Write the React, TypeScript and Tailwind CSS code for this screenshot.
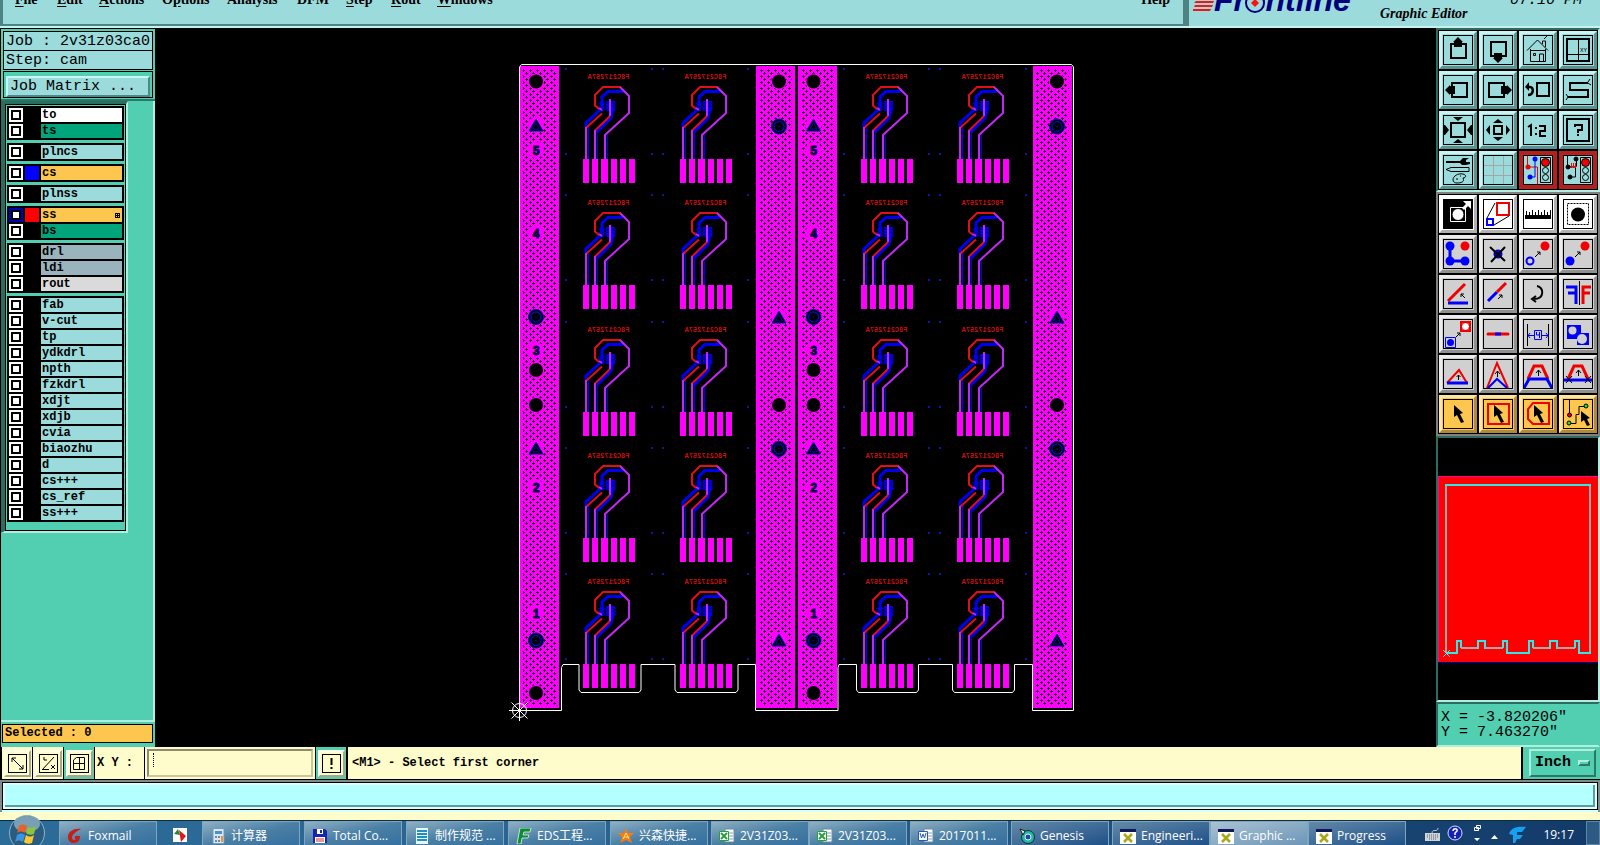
import type { ReactNode } from "react";
import clsx from "clsx";

const MENUS = [
  { name: "File", hot: "F", width: "w-[42px]" },
  { name: "Edit", hot: "E", width: "w-[42px]" },
  { name: "Actions", hot: "A", width: "w-[63px]" },
  { name: "Options", hot: "p", width: "w-[65px]" },
  { name: "Analysis", hot: "", width: "w-[70px]" },
  { name: "DFM", hot: "", width: "w-[49px]" },
  { name: "Step", hot: "S", width: "w-[45px]" },
  { name: "Rout", hot: "R", width: "w-[46px]" },
  { name: "Windows", hot: "W", width: "w-[70px]" },
];

type Layer = { name: string; bg: string; swatch?: string; active?: boolean };

const AQUA = "bg-[#9bdbdb]";

const LAYER_GROUPS: Layer[][] = [
  [
    { name: "to", bg: "bg-white" },
    { name: "ts", bg: "bg-[#00a57c]" },
  ],
  [{ name: "plncs", bg: AQUA }],
  [{ name: "cs", bg: "bg-[#fdc64e]", swatch: "bg-[#0000ff]" }],
  [{ name: "plnss", bg: AQUA }],
  [
    { name: "ss", bg: "bg-[#fdc64e]", swatch: "bg-[#ff0000]", active: true },
    { name: "bs", bg: "bg-[#00a57c]" },
  ],
  [
    { name: "drl", bg: "bg-[#9ab4be]" },
    { name: "ldi", bg: "bg-[#9ab4be]" },
    { name: "rout", bg: "bg-[#dadada]" },
  ],
  ["fab", "v-cut", "tp", "ydkdrl", "npth", "fzkdrl", "xdjt", "xdjb", "cvia", "biaozhu", "d", "cs+++", "cs_ref", "ss+++"].map(
    (name) => ({ name, bg: AQUA })
  ),
];

const MONO = "font-['Liberation_Mono',monospace]";

function MenuLabel({ name, hot }: { name: string; hot: string }) {
  if (!hot) return <>{name}</>;
  const at = name.indexOf(hot);
  return (
    <>
      {name.slice(0, at)}
      <u className="decoration-1 underline-offset-2">{hot}</u>
      {name.slice(at + 1)}
    </>
  );
}

function Header() {
  return (
    <header className="flex h-7 shrink-0 overflow-hidden border-b-2 border-[#c8f2f2] bg-[#9bdbdb] font-['Liberation_Serif',serif] text-black">
      <nav className="flex flex-1 items-start border-x-3 border-b-2 border-[#4d8383] pl-3">
        {MENUS.map((m) => (
          <button key={m.name} className={clsx("-mt-2.5 text-left text-sm font-bold leading-5", m.width)}>
            <MenuLabel name={m.name} hot={m.hot} />
          </button>
        ))}
        <button className="-mt-2.5 ml-auto mr-[13px] text-sm font-bold leading-5">Help</button>
      </nav>
      <div className="flex w-[414px] items-start border-l-3 border-[#4d8383] pl-1">
        <svg width="164" height="26" viewBox="0 0 164 26">
          <path d="M3 1h18l-1 2H1zM2 5h18l-1 2H1zM0 9h18l-1 2H0z" fill="#ff1010" />
          <text x="21" y="11" fontSize="32" fontWeight="bold" fontStyle="italic" fill="#00007c" className="font-['Liberation_Sans',sans-serif]">
            Frontline
          </text>
          <circle cx="62" cy="3" r="9" fill="#9bdbdb" stroke="#00007c" strokeWidth="2" />
          <path d="M62 -1l4 4-4 4-4-4z" fill="#ff1010" />
        </svg>
        <span className="ml-[23px] mt-1 text-sm font-bold italic leading-5">Graphic Editor</span>
        <span className={clsx("-mt-[9px] ml-auto mr-[18px] text-[15px] italic leading-5", MONO)}>07:16 PM</span>
      </div>
    </header>
  );
}

function LayerRow({ layer }: { layer: Layer }) {
  return (
    <label className="flex h-3.5 items-center gap-0.5">
      <span className={clsx("flex h-3.5 w-3.5 items-center justify-center", layer.active ? "bg-[#0000b8]" : "bg-white")}>
        <input type="checkbox" className="h-2.5 w-2.5 appearance-none border-2 border-black bg-white" />
      </span>
      <span className={clsx("h-3.5 w-3.5", layer.swatch ?? "bg-black")} />
      <span className={clsx("flex h-3.5 flex-1 items-center justify-between pl-px pr-0.5 text-xs font-bold leading-[14px]", layer.bg)}>
        {layer.name}
        {layer.active && (
          <svg width="5" height="5" viewBox="0 0 5 5">
            <path d="M0 .5h5M0 2.5h5M0 4.5h5M.5 0v5M2.5 0v5M4.5 0v5" stroke="#000" />
          </svg>
        )}
      </span>
    </label>
  );
}

function LayerPanel() {
  return (
    <aside className={clsx("flex w-[155px] shrink-0 flex-col border-l border-black bg-[#52ceb0] text-black", MONO)}>
      <div className="border-b-2 border-t border-b-[#2c7867] border-t-black px-0.5 pb-px pt-0.5">
        <div className="h-5 border border-black bg-[#9bdbdb] pl-0.5 text-[15px] leading-[19px]">Job : 2v31z03ca0</div>
        <div className="h-[19px] border border-t-0 border-black bg-[#9bdbdb] pl-0.5 text-[15px] leading-[19px]">Step: cam</div>
        <div className="mt-px h-[27px] border border-black p-0.5">
          <button className="h-[21px] w-full border-2 border-b-[#4b8a88] border-l-[#c8f8f4] border-r-[#4b8a88] border-t-[#c8f8f4] bg-[#9bdbdb] pl-0.5 text-left text-[15px] leading-[17px]">
            Job Matrix ...
          </button>
        </div>
      </div>
      <div className="flex-1 border-b-2 border-r-2 border-[#b0efdf]">
        <div className="w-[127px] border-b-2 border-l-4 border-r-2 border-t-[3px] border-b-[#b0efdf] border-l-[#2e6b5e] border-r-[#b0efdf] border-t-[#2e6b5e]">
          <div className="flex flex-col gap-[3px] border border-black px-px pb-2 pt-px">
            {LAYER_GROUPS.map((group, i) => (
              <div key={i} className="flex flex-col gap-0.5 border-2 border-black bg-black">
                {group.map((layer) => (
                  <LayerRow key={layer.name} layer={layer} />
                ))}
              </div>
            ))}
          </div>
        </div>
      </div>
      <div className="mb-1 ml-px mr-0.5 mt-0.5 h-[19px] border border-black bg-[#fdc64e] pl-0.5 text-xs font-bold leading-[17px]">
        Selected : 0
      </div>
    </aside>
  );
}

// ---- board drawing ----

const CELL_X = [0, 97, 278, 374];
const ROWS = [0, 1, 2, 3, 4];
const ROW_PITCH = 126.3;

type Mark = ["hole" | "ring" | "tri" | "num", number, string?];

const NUMBERED: Mark[] = [
  ["hole", 81.5], ["tri", 125], ["num", 150, "5"], ["num", 233, "4"], ["ring", 317], ["num", 350, "3"],
  ["hole", 370], ["hole", 405], ["tri", 448], ["num", 487, "2"], ["num", 613, "1"], ["ring", 640.5], ["hole", 693],
];
const PLAIN: Mark[] = [["hole", 81.5], ["ring", 126.5], ["tri", 317], ["hole", 405], ["ring", 449], ["tri", 640]];

const STRIPS = [
  { x: 520, cx: 536, marks: NUMBERED },
  { x: 756, cx: 779, marks: PLAIN },
  { x: 798, cx: 813.5, marks: NUMBERED },
  { x: 1033, cx: 1057, marks: PLAIN },
];

function StripMark({ cx, mark }: { cx: number; mark: Mark }) {
  const [kind, y, text] = mark;
  if (kind === "hole") return <circle cx={cx} cy={y} r="7" fill="#000" />;
  if (kind === "ring")
    return (
      <g stroke="#0010a0">
        <circle cx={cx} cy={y} r="7.500" fill="#000" />
        <circle cx={cx} cy={y} r="5" fill="none" strokeWidth="1.500" />
        <circle cx={cx} cy={y} r="0.500" />
      </g>
    );
  if (kind === "tri")
    return (
      <g stroke="#0010a0">
        <path d={`M${cx} ${y - 6}l7 12h-14z`} fill="#000" />
        <path d={`M${cx} ${y - 2}l3.500 6h-7z`} fill="none" />
      </g>
    );
  return (
    <text x={cx} y={y + 5} textAnchor="middle" fontSize="12" fontWeight="bold" fill="#000c88" stroke="#00002c" className="font-['Liberation_Sans',sans-serif]">
      {text}
    </text>
  );
}

function Circuit({ x, y }: { x: number; y: number }) {
  return (
    <g transform={`translate(${x} ${y})`} fill="none">
      <text transform="translate(629.5 79) scale(-1 1)" fontSize="7" fontWeight="bold" fill="#c81010" className={MONO}>
        F8C217257A
      </text>
      <g fill="#0000d8">
        <path d="M606 101h9v10h-9zM600 102h4v9h-4z" />
        <path d="M598 103h18v1h-18zM598 106h18v1h-18zM598 109h18v1h-18z" fill="#0000a0" />
      </g>
      <g stroke="#0000f0" strokeWidth="3">
        <path d="M623 91.5H608L602 97v9M601 109l-15 14v4M613 108l-2 10-14 14" />
        <path d="M588.500 127v32M597.500 130v29M607.500 135v24" strokeWidth="1" />
      </g>
      <g stroke="#e01018" strokeWidth="2">
        <path d="M621 87H603l-8 8v10.500l4 3.500M602 113.500L586 128M610 116l-15 14.500" />
      </g>
      <g stroke="#c028f4" strokeWidth="2">
        <path d="M620 87l9 9v17l-24 22v24M586 127v32M595 130v29" />
        <path d="M610 99v17M599 108l3 2" />
      </g>
      <path d="M583 159h6v24h-6zM592 159h6v24h-6zM601 159h7v24h-7zM611 159h6v24h-6zM620 159h6v24h-6zM629 159h6v24h-6z" fill="#ff00ff" />
    </g>
  );
}

function Board() {
  return (
    <main className="flex min-w-0 flex-1 items-center justify-center overflow-hidden bg-black">
      <svg width="581" height="677" viewBox="505 49 581 677" className="shrink-0">
        <defs>
          <pattern id="mesh" width="7" height="6" patternUnits="userSpaceOnUse">
            <path d="M0 1h3v1h-3zM1 0h1v3h-1zM4 4h3v1h-3zM5 3h1v3h-1z" fill="#28002c" shapeRendering="crispEdges" />
          </pattern>
        </defs>
        {STRIPS.map((s) => (
          <g key={s.x}>
            <rect x={s.x} y="66" width="39" height="642" fill="#ff00ff" />
            <rect x={s.x + 3} y="69" width="33" height="636" fill="url(#mesh)" />
            {s.marks.map((m, i) => (
              <g key={i}>
                <circle cx={s.cx} cy={m[1]} r="8" fill="#ff00ff" />
                <StripMark cx={s.cx} mark={m} />
              </g>
            ))}
          </g>
        ))}
        {ROWS.map((r) =>
          [566, 652, 663, 748, 844, 929, 940, 1026].map((x) => (
            <path key={`${r}-${x}`} d={`M${x - 1} ${Math.round(68 + r * ROW_PITCH)}h2v2h-2zm0 85h2v2h-2z`} fill="#1414a8" />
          ))
        )}
        {ROWS.map((r) => CELL_X.map((x) => <Circuit key={`${r}-${x}`} x={x} y={Math.round(r * ROW_PITCH)} />))}
        <path
          d="M519.500 710.500V67l2-2.500h550l2 2.500v643.500h-41V664.500h-18V690l-2 2.500h-58l-2-2.500v-25.500h-34V690l-2 2.500h-58l-2-2.500v-25.500h-17.500l-1 3v43H755.500v-46h-17.500V690l-2 2.500h-59l-2-2.500v-25.500h-34V690l-2 2.500h-58l-2-2.500v-25.500h-16l-1.500 3v43z"
          fill="none"
          stroke="#fff"
        />
        <g stroke="#fff" fill="none">
          <circle cx="519.5" cy="710.5" r="7" />
          <path d="M509 710.500h21M519.500 700v21M511.500 702.500l16 16M527.500 702.500l-16 16" />
        </g>
      </svg>
    </main>
  );
}

// ---- toolbar icons, each drawn on a 30x30 grid ----

const K = "#000";
const B = "#0000ff";
const R = "#f00000";

const ARROW = "M11 6l9 8-3 1 4 8-3 1-4-8-3 2z";

const VIEW_ICONS: [string, ReactNode][] = [
  ["Pan up", <><path d="M8 9h15v14H8z" fill="none" strokeWidth="2" /><path d="M15 2l5 5h-1v5h-8V7h-1z" fill={K} stroke="none" /></>],
  ["Pan down", <><path d="M8 7h15v14H8z" fill="none" strokeWidth="2" /><path d="M15 28l5-5h-1v-5h-8v5h-1z" fill={K} stroke="none" /></>],
  ["Home", <><path d="M4 15.500L14.500 5 25 15.500M7.500 14v12.500h15V14M7.500 15.500h15M19.500 9V6h3v6M21 4l3-3M16.500 26v-7h4v7" fill="none" /><path d="M10.500 18.500h2v2h-2z" fill="none" /></>],
  ["Coordinates zoom", <><path d="M4 4h22v22H4z" fill="none" strokeWidth="2" /><path d="M15.500 4v22M4 19.500h22" /><text x="17" y="17" fontSize="6" stroke="none" fill={K} className={MONO}>XY</text></>],
  ["Pan left", <><path d="M9 8h15v14H9z" fill="none" strokeWidth="2" /><path d="M2 15l5-5v1h5v8H7v1z" fill={K} stroke="none" /></>],
  ["Pan right", <><path d="M6 8h15v14H6z" fill="none" strokeWidth="2" /><path d="M29 15l-5-5v1h-6v8h6v1z" fill={K} stroke="none" /></>],
  ["Previous view", <><path d="M14 8h12v13H14z" fill="none" strokeWidth="2" /><path d="M4 12h3c4 0 4 8-2 8" fill="none" strokeWidth="2.500" /><path d="M2 12l4-5v9z" fill={K} stroke="none" /></>],
  ["Snake view", <><path d="M25 8H7v7h18v7H5" fill="none" strokeWidth="2" /><path d="M25 7l2-3M25 8l3 2M5 22l-2 3M5 22l-2-3" /></>],
  ["Fit view", <><path d="M8 8h14v14H8z" fill="none" strokeWidth="2" /><path d="M10 2h10l-5 4zM10 28h10l-5-4zM1 10h1l4 5-4 5H1zM29 10h-1l-4 5 4 5h1z" fill={K} stroke="none" /></>],
  ["Zoom out", <><path d="M11 11h8v8h-8z" fill="none" strokeWidth="2" /><path d="M10 8h10l-5-4zM10 22h10l-5 4zM7 10v10l-4-5zM23 10v10l4-5z" fill={K} stroke="none" /></>],
  ["Scale", <path d="M5 12l3-2v11M13 12v2M13 18v2M16 11h6v5h-5v5h6" fill="none" strokeWidth="2" />],
  ["Help", <><path d="M4 4h22v22H4z" fill="none" strokeWidth="2" /><path d="M12 12v-2h7v5h-4v3M14 20h2" fill="none" strokeWidth="2" /></>],
  ["Setup", <><path d="M3 6h14l3-3h6l-3 2v2h4v2l-4 1h-4l-2-2H3z" fill={K} stroke="none" /><path d="M3 14.500l5-2h18v4H8zM10 25c0-4 5-7 10-6 4 1 3 4 0 4 2 4-2 5-6 5-2 0-4-1-4-3zM13 24h2M17 21h1" fill="none" /></>],
  ["Grid", <path d="M.5 10.500h29M.5 20.500h29M10.500 .5v29M20.500 .5v29" stroke="#a0a8a8" />],
];

function NetIcon({ short }: { short?: boolean }) {
  return (
    <>
      <rect x="0.5" y="0.5" width="29" height="29" fill="#9bdbdb" stroke={K} />
      {short ? (
        <>
          <path d="M4.500 1v11h8v10H8M13.500 4v8" fill="none" />
          <path d="M6 11.500h8M8.500 8v5M10.500 8v5M12.500 8v5" stroke={R} />
          <circle cx="13" cy="4" r="2" fill={K} />
          <circle cx="5" cy="12" r="2" fill={K} />
          <circle cx="7" cy="22" r="2" fill={K} />
        </>
      ) : (
        <>
          <path d="M4.500 1v11h10v17" fill="none" stroke={R} />
          <path d="M12 4v18H7" fill="none" stroke={B} />
          <circle cx="12" cy="4" r="2.500" fill={B} stroke="none" />
          <circle cx="5" cy="12" r="2.500" fill={R} stroke="none" />
          <circle cx="7" cy="22" r="2.500" fill={B} stroke="none" />
        </>
      )}
      <path d="M17.500 2.500h10v25h-10z" fill="none" />
      <circle cx="22.500" cy="7.500" r="4" fill={R} />
      <circle cx="22.500" cy="15.500" r="3" fill="none" />
      <circle cx="22.500" cy="22.500" r="3" fill="none" />
    </>
  );
}

const WHITE_ICONS: [string, ReactNode][] = [
  ["Feature select", <><path d="M1 1h28v28H1z" fill={K} /><path d="M7.500 8.500h15v14h-15z" fill="none" stroke="#fff" /><circle cx="15" cy="15.500" r="6" fill="#fff" /><path d="M20 10l5-5" stroke="#fff" strokeWidth="3" /><path d="M20 2h8v8z" fill="#fff" stroke="none" /></>],
  ["Zoom area", <><path d="M14 4h12v12H14z" fill="none" stroke={R} strokeWidth="2" /><path d="M4 20h6v6H4z" fill="none" stroke={B} strokeWidth="2" /><path d="M4 19L12 4M11 26l15-9" /></>],
  ["Measure", <><path d="M2 16h26v4H2z" fill={K} stroke="none" /><path d="M3.500 16v-4M6.500 16v-3M9.500 16v-5M12.500 16v-3M15.500 16v-5M18.500 16v-3M21.500 16v-5M24.500 16v-3M27.500 16v-5" /></>],
  ["Highlight", <><path d="M4.500 4.500h21v21h-21z" fill="none" strokeDasharray="2 1" /><circle cx="15" cy="15.500" r="7" fill={K} stroke="none" /></>],
];

const EDIT_ICONS: [string, ReactNode][] = [
  ["Net copy", <><path d="M7 7v15h15" fill="none" stroke={B} strokeWidth="3" /><g fill={B} stroke="none"><circle cx="7" cy="7" r="4.500" /><circle cx="7" cy="22" r="4.500" /><circle cx="22" cy="22" r="4.500" /></g><circle cx="22" cy="7" r="4.500" fill={R} stroke="none" /></>],
  ["Delete", <><circle cx="15" cy="15" r="4.500" fill="#0000c8" stroke="none" /><path d="M7 8l15 14M22 8L8 23" strokeWidth="2" /></>],
  ["Move", <><circle cx="22" cy="7" r="4.500" fill={R} stroke="none" /><circle cx="7" cy="22" r="3.500" fill="none" stroke={B} strokeWidth="2" /><path d="M12 18l5-5M14 13h3v3" fill="none" /></>],
  ["Copy", <><circle cx="22" cy="7" r="4.500" fill={R} stroke="none" /><circle cx="7" cy="22" r="4.500" fill={B} stroke="none" /><path d="M12 18l5-5M14 13h3v3" fill="none" /></>],
  ["Rotate line", <><path d="M5 22L22 5" stroke={R} strokeWidth="3" /><path d="M5 24h20" stroke={B} strokeWidth="3" /><path d="M22 19l-4-4M18 18v-3h3" fill="none" /></>],
  ["Stretch line", <><path d="M5 22l9-9" stroke={B} strokeWidth="3" /><path d="M14 13l9-9" stroke={R} strokeWidth="3" /><path d="M15 20l4-4M16 16h3v3" fill="none" /></>],
  ["Rotate", <path d="M14 7c7 1 8 13-3 13M13 17l-4 3 4 3" fill="none" strokeWidth="2" />],
  ["Mirror", <><path d="M16.500 2v24" /><path d="M3 8h10v17M5 14h8" fill="none" stroke={B} strokeWidth="3" /><path d="M28 8h-8v17M20 14h7" fill="none" stroke={R} strokeWidth="3" /></>],
  ["Resize", <><path d="M18 3h9v9h-9z" fill="#fff" stroke={R} strokeWidth="2" /><circle cx="22.500" cy="7.500" r="4" fill="none" stroke={R} /><path d="M2.500 18.500h10v10h-10z" fill="none" stroke={B} /><circle cx="7.500" cy="23.500" r="3.500" fill={B} stroke="none" /><path d="M13 18l4-4M14 14h3v3" fill="none" /></>],
  ["Break line", <><path d="M5 15h20" stroke={R} strokeWidth="3" strokeLinecap="round" /><path d="M12 15h6" stroke={B} strokeWidth="3" /></>],
  ["Spacing", <><path d="M4.500 5v22M25.500 5v22" /><path d="M5 16.500h6M19 16.500h6M7 14l-2 2.500 2 2.500M23 14l2 2.500-2 2.500M11.500 11.500h7v9h-7zM13.500 13v3h3M16.500 13v6" fill="none" stroke={B} /></>],
  ["Merge", <><path d="M4 6h14v8h8v12H14v-6H4z" fill={B} stroke="none" /><circle cx="9.500" cy="11.500" r="4" fill="#d0d0d0" stroke="none" /><circle cx="19" cy="20" r="5" fill="#d0d0d0" stroke="none" /></>],
  ["Corner flat", <><path d="M4 24L16 11l8 13" fill="none" stroke={R} strokeWidth="2" /><path d="M4 24h21" stroke={B} strokeWidth="3" /><path d="M15.500 21v-5M13.500 18l2-2 2 2" fill="none" /></>],
  ["Corner sharp", <><path d="M4 29L14 4l11 25" fill="none" stroke={R} strokeWidth="2" /><path d="M5 29l9-9 10 9" fill="none" stroke={B} strokeWidth="2" /><path d="M14.500 18v-6M12 15l2.500-3 2.500 3" fill="none" /></>],
  ["Trapezoid", <><path d="M5 20L11 7h8l6 13" fill="none" stroke={R} strokeWidth="3" /><path d="M1 29l5-9h18l5 9" fill="none" stroke={B} strokeWidth="3" /><path d="M15.500 17v-6M13 14l2.500-3 2.500 3" fill="none" /></>],
  ["Trapezoid cut", <><path d="M5 20L11 7h8l6 13" fill="none" stroke={R} strokeWidth="3" /><path d="M1 21h28" stroke={B} strokeWidth="3" /><path d="M15.500 17v-6M13 14l2.500-3 2.500 3M3 17l6 7M9 17l-6 7M22 17l6 7M28 17l-6 7" fill="none" /></>],
];

const SELECT_ICONS: [string, ReactNode][] = [
  ["Select", <path d={ARROW} fill={K} stroke="none" />],
  ["Select in frame", <><path d="M5 5h21v20H5z" fill="none" stroke={R} strokeWidth="2" /><path d={ARROW} fill={K} stroke="none" /></>],
  ["Select in polygon", <><path d="M10 4h16v21H10l-5-5V10z" fill="none" stroke={R} strokeWidth="2" /><path d={ARROW} fill={K} stroke="none" /></>],
  ["Select net", <><path d="M6.500 1v14M6 24.500h7v-9h3V7.500h7" fill="none" /><circle cx="6.500" cy="16" r="2" fill={R} /><circle cx="6" cy="24" r="2" fill="#20e020" /><circle cx="23" cy="7" r="2" fill="#20e020" /><path d="M18 12l9 7-3 1 3 6-3 1-3-6-3 2z" fill={K} stroke="none" /></>],
];

function Tool({ label, tone, children }: { label: string; tone: string; children: ReactNode }) {
  return (
    <button aria-label={label} className={clsx("flex h-[38px] w-[38px] items-center justify-center border-3", tone)}>
      <svg width="30" height="30" viewBox="0 0 30 30" stroke={K}>
        {children}
        <rect x="0.500" y="0.500" width="29" height="29" fill="none" />
      </svg>
    </button>
  );
}

const TONE_AQUA = "bg-[#9bdbdb] border-t-[#c8f4f4] border-l-[#c8f4f4] border-b-[#5a9292] border-r-[#5a9292]";
const TONE_RED = "bg-[#b42020] border-[#b42020]";
const TONE_WHITE = "bg-white border-t-white border-l-white border-b-[#b0b0b0] border-r-[#b0b0b0]";
const TONE_GRAY = "bg-[#d0d0d0] border-t-[#ececec] border-l-[#ececec] border-b-[#909090] border-r-[#909090]";
const TONE_GOLD = "bg-[#fdc64e] border-t-[#ffe6a0] border-l-[#ffe6a0] border-b-[#b08a38] border-r-[#b08a38]";

function Toolbox() {
  return (
    <aside className="flex w-[164px] shrink-0 flex-col bg-[#52ceb0]">
      <div className="border-2 border-b-[#b0efdf] border-l-[#2e6b5e] border-r-[#b0efdf] border-t-[#2e6b5e] bg-black p-px">
        <div className="grid grid-cols-4 gap-0.5">
          {VIEW_ICONS.map(([label, art]) => (
            <Tool key={label} label={label} tone={TONE_AQUA}>{art}</Tool>
          ))}
          <Tool label="Net compare" tone={TONE_RED}><NetIcon /></Tool>
          <Tool label="Net shorts" tone={TONE_RED}><NetIcon short /></Tool>
        </div>
      </div>
      <div className="border-2 border-[#808080] bg-black p-px">
        <div className="grid grid-cols-4 gap-0.5">
          {WHITE_ICONS.map(([label, art]) => (
            <Tool key={label} label={label} tone={TONE_WHITE}>{art}</Tool>
          ))}
          {EDIT_ICONS.map(([label, art]) => (
            <Tool key={label} label={label} tone={TONE_GRAY}>{art}</Tool>
          ))}
          {SELECT_ICONS.map(([label, art]) => (
            <Tool key={label} label={label} tone={TONE_GOLD}>{art}</Tool>
          ))}
        </div>
      </div>
      <div className="flex flex-1 items-center justify-center border-2 border-b-[#b0efdf] border-l-[#2e6b5e] border-r-[#b0efdf] border-t-[#2e6b5e] bg-black">
        <svg width="160" height="187" viewBox="1438 476 160 187" fill="none">
          <path d="M1438 476h160v187h-160z" fill="#ff0000" />
          <path d="M1438 476.500h160M1438.500 476v186" stroke="#ff00a0" />
          <path d="M1438 662.500h160" stroke="#0000a0" />
          <path d="M1446 653V485M1590 653V485M1461 648h17M1485 648h18M1533 648h17M1557 648h18" stroke="#a8a8a8" strokeWidth="2" />
          <path
            d="M1445 485h146M1446 653h11v-12h4v7M1478 649v-8h7v8M1503 648v-7h4v12h22v-12h4v7M1550 649v-8h7v8M1575 648v-7h4v12h12"
            stroke="#30e8e8"
            strokeWidth="2"
          />
          <path d="M1443 650l7 7M1450 650l-7 7" stroke="#80e0e0" />
        </svg>
      </div>
      <div className={clsx("h-[45px] border-2 border-b-[#b0efdf] border-l-[#2e6b5e] border-r-[#52ceb0] border-t-[#2e6b5e] pl-[3px] pt-1.5 text-[15px] leading-[15px] text-black", MONO)}>
        <div>X = -3.820206"</div>
        <div>Y = 7.463270"</div>
      </div>
    </aside>
  );
}

function SnapButton({ label, framed, children }: { label: string; framed?: boolean; children: ReactNode }) {
  return (
    <button
      aria-label={label}
      className={clsx(
        "flex w-[31px] shrink-0 items-center justify-center border-r border-black",
        framed ? "bg-[#52ceb0]" : "bg-[#fffccc]"
      )}
    >
      <span className="border-2 border-b-[#a8a888] border-l-[#ffffe8] border-r-[#a8a888] border-t-[#ffffe8] bg-[#fffccc] p-0.5">
        <svg width="19" height="19" viewBox="0 0 19 19" fill="none" stroke={K}>
          <rect x="0.500" y="0.500" width="18" height="18" />
          {children}
        </svg>
      </span>
    </button>
  );
}

function CommandBar() {
  return (
    <div className={clsx("flex h-[33px] shrink-0 border-b border-l-2 border-black bg-[#fffccc] text-xs font-bold text-black", MONO)}>
      <SnapButton label="Snap corner"><path d="M4 4l11 11M4 8V4h4M11 15h4v-4" /></SnapButton>
      <SnapButton label="Snap angle"><path d="M3 16L15 3M5 3v3h3M3 15.500h7M12 11l4 4M16 11l-4 4" /></SnapButton>
      <SnapButton label="Snap grid" framed><path d="M3.500 6l3-2.500h8v12h-11zM9.500 3v12M3 9.500h12" /></SnapButton>
      <label htmlFor="xy" className="w-[49px] self-center pl-0.5">X Y :</label>
      <div className="relative w-[172px] border-x border-black p-0.5">
        <input
          id="xy"
          type="text"
          className="h-7 w-full border-2 border-b-[#c8c8a0] border-l-[#8c8c70] border-r-[#c8c8a0] border-t-[#8c8c70] bg-[#fffccc] px-1 outline-none"
        />
        <span className="absolute left-2 top-1.5 h-3.5 border-l border-dotted border-black" />
      </div>
      <SnapButton label="Apply" framed><path d="M9.500 4v7M9.500 13v2" strokeWidth="2" /></SnapButton>
      <div className="flex flex-1 items-center border-l border-black pl-1">&lt;M1&gt; - Select first corner</div>
      <div className="w-[79px] border-l-2 border-black bg-[#52ceb0] py-0.5 pl-1.5 pr-1">
        <button className="flex h-7 w-full items-center justify-between border-2 border-b-[#2c7867] border-l-[#b0efdf] border-r-[#2c7867] border-t-[#b0efdf] pl-1 pr-1 text-[15px]">
          Inch
          <span className="h-1.5 w-3 border-2 border-b-[#2c7867] border-l-[#b0efdf] border-r-[#2c7867] border-t-[#b0efdf]" />
        </button>
      </div>
    </div>
  );
}

// ---- taskbar ----

function TaskIcon({ kind }: { kind: string }) {
  return (
    <svg width="16" height="16" viewBox="0 0 16 16" className="shrink-0">
      {kind === "fox" && <path d="M14 1C8 0 1 3 1 9c0 4 3 6 6 6 4 0 6-3 6-7H8v3h1c-1 2-4 1-4-1 0-4 4-6 9-9z" fill="#c81c14" />}
      {kind === "pin" && <><rect x="1" y="1" width="14" height="14" fill="#fff" /><path d="M2 7l4-5 2 6z" fill="#189030" /><path d="M7 3l7 6-5 6z" fill="#e01818" /></>}
      {kind === "calc" && <><rect x="3" y="0.500" width="11" height="15" rx="1" fill="#d8e8f4" stroke="#7898b0" /><path d="M5 3h7v3H5z" fill="#4890d0" /><path d="M5 8h2v2H5zM8 8h2v2H8zM5 12h2v2H5zM8 12h2v2H8z" fill="#6888a0" /><path d="M11 8h2v6h-2z" fill="#f09030" /></>}
      {kind === "disk" && <><path d="M1 1h12l2 2v12H1z" fill="#1824b0" /><path d="M5 1h6v5H5zM3 9h10v6H3z" fill="#fff" /><path d="M8 2h2v3H8z" fill="#1824b0" /><path d="M4 11h8M4 13h8" stroke="#d03030" /></>}
      {kind === "list" && <><rect x="2" y="0" width="12" height="16" fill="#e8f8ff" /><path d="M3 3h10M3 6h10M3 9h10M3 12h10" stroke="#2090c8" strokeWidth="2" /></>}
      {kind === "eds" && <path d="M4 0h11l-1 4H8l-1 3h6l-1 3H6l-1 6H1z" fill="#10883c" stroke="#b8e8c0" />}
      {kind === "star" && <><path d="M8 0l2 5 6 0-4 4 2 6-6-3-6 3 2-6-4-4 6 0z" fill="#f47c10" /><path d="M8 5l3 6M8 5l-3 6M6 9h5" stroke="#ffe080" /></>}
      {kind === "xls" && <><path d="M6 1h9v13H6z" fill="#fff" stroke="#7088a0" /><path d="M10 5h4M10 8h4M10 11h4" stroke="#80a0c0" /><path d="M.5 3.500h9v9h-9z" fill="#f4fff4" stroke="#2c9c3c" /><path d="M2 5l6 6M8 5l-6 6" stroke="#2c9c3c" strokeWidth="2" /></>}
      {kind === "doc" && <><path d="M6 1h9v13H6z" fill="#fff" stroke="#7088a0" /><path d="M10 5h4M10 8h4M10 11h4" stroke="#80a0c0" /><path d="M.5 3.500h9v9h-9z" fill="#f4f8ff" stroke="#2c58b4" /><path d="M2 5l1.500 5L5 6l1.500 4L8 5" stroke="#2c58b4" fill="none" /></>}
      {kind === "gen" && <><circle cx="9" cy="9" r="6.500" fill="#20b8a8" stroke="#063828" /><circle cx="9" cy="9" r="3" fill="#1848b0" stroke="#f0f0f0" /><path d="M1 1l5 2-2 4z" fill="#e8f4e8" stroke="#1a1a1a" /></>}
      {kind === "xwin" && <><path d="M0 1h16v15H0z" fill="#fff" /><path d="M0 1h16v3H0z" fill="#101858" /><path d="M4 6l8 8M12 6l-8 8" stroke="#a8a818" strokeWidth="2.500" /></>}
    </svg>
  );
}

const TASKS = [
  { icon: "fox", text: "Foxmail", tail: "" },
  { icon: "pin", text: "", tail: "" },
  { icon: "calc", text: "计算器", tail: "mr-1" },
  { icon: "disk", text: "Total Co...", tail: "mr-1" },
  { icon: "list", text: "制作规范 ...", tail: "mr-1" },
  { icon: "eds", text: "EDS工程...", tail: "mr-1" },
  { icon: "star", text: "兴森快捷...", tail: "mr-[3px]" },
  { icon: "xls", text: "2V31Z03...", tail: "" },
  { icon: "xls", text: "2V31Z03...", tail: "mr-[3px]" },
  { icon: "doc", text: "2017011...", tail: "mr-[3px]" },
  { icon: "gen", text: "Genesis", tail: "mr-[3px]" },
  { icon: "xwin", text: "Engineeri...", tail: "" },
  { icon: "xwin", text: "Graphic ...", tail: "", active: true },
  { icon: "xwin", text: "Progress", tail: "" },
];

function Taskbar() {
  return (
    <footer className="relative flex h-[25px] shrink-0 border-t border-[#0c2c40] bg-linear-to-r from-[#2c6c98] via-[#28608f] to-[#123a68] pl-[59px] font-['Open_Sans','Noto_Sans_CJK_SC',sans-serif] text-xs text-white">
      <button aria-label="Start" className="absolute -top-1.5 left-2">
        <svg width="38" height="31" viewBox="0 0 38 31">
          <circle cx="19" cy="18" r="17.500" fill="#2a5c80" stroke="#8eb4c8" />
          <ellipse cx="19" cy="9" rx="13" ry="8" fill="#9cbccc" opacity="0.7" />
          <path d="M11 11c3-2 5-2 8 0l-2 7c-3-2-5-2-8 0z" fill="#e8602c" />
          <path d="M20 12c2 1 5 1 8-1l-2 8c-3 1-6 1-8-1z" fill="#8cc43c" />
          <path d="M9 20c3-2 5-2 8 0l-2 7c-3-2-5-2-8 0z" fill="#3c94dc" />
          <path d="M18 20c3 2 5 2 8 0l-2 8c-3 1-6 1-8-1z" fill="#fcc82c" />
        </svg>
      </button>
      {TASKS.map((t, i) =>
        t.text ? (
          <button
            key={i}
            className={clsx(
              "flex h-full w-[98px] shrink-0 items-center gap-[5px] whitespace-nowrap border-x border-t border-[#7ea6bf] bg-linear-to-br pl-[7px] pt-1",
              t.active ? "from-[#aac2d2] to-[#6c96b8]" : i > 9 ? "from-[#6289a8] to-[#1e5088]" : "from-[#8fb0c4] via-[#4b80a5] to-[#3470a0]",
              t.tail
            )}
          >
            <TaskIcon kind={t.icon} />
            {t.text}
          </button>
        ) : (
          <button key={i} aria-label="Pinned" className="flex w-[45px] shrink-0 items-center justify-center pt-1">
            <TaskIcon kind={t.icon} />
          </button>
        )
      )}
      <div className="ml-auto flex items-center gap-2 pt-1">
        <svg width="76" height="20" viewBox="0 0 76 20">
          <path d="M0 8h15v8H0z" fill="#d0d4d8" />
          <path d="M2 10h11M2 12h11M4 14h7" stroke="#586068" strokeDasharray="1 1" />
          <path d="M7 8c0-5 6 0 6-5" stroke="#c0c4c8" fill="none" />
          <circle cx="30" cy="8" r="7" fill="#1420b8" stroke="#d8e0f4" />
          <path d="M28 6c0-3 5-3 4 0l-2 2v2M30 11v2" stroke="#fff" strokeWidth="1.500" fill="none" />
          <path d="M51.500 .5h4v3h-4zM49.500 2.500h4v3h-4z" stroke="#fff" fill="#1c4878" />
          <path d="M49 13h6l-3 3zM66 14h7l-3.500-4z" fill="#fff" />
        </svg>
        <svg width="18" height="18" viewBox="0 0 18 18">
          <path d="M0 8c2-6 7-8 17-7l-4 5H8v3h6l-3 4H8l-2 4H4V9z" fill="#18a0f0" />
        </svg>
        <span className="ml-2">19:17</span>
        <button aria-label="Show desktop" className="-mt-1 ml-1 h-6 w-3.5 border border-[#5c86a4] bg-[#2c5a84]" />
      </div>
    </footer>
  );
}

export default function App() {
  return (
    <div className="flex h-screen flex-col overflow-hidden bg-[#fffccc]">
      <Header />
      <div className="flex min-h-0 flex-1">
        <LayerPanel />
        <Board />
        <Toolbox />
      </div>
      <CommandBar />
      <div className="mb-2 h-[32px] shrink-0 border-2 border-b-0 border-[#7c8c8c] bg-[#d8ffff]">
        <div className="h-7 border border-black bg-[#e0ffff] p-0.5">
          <div className="h-full border-b-2 border-r-2 border-[#5c9c9c] bg-[#b4ffff]" />
        </div>
      </div>
      <Taskbar />
    </div>
  );
}
